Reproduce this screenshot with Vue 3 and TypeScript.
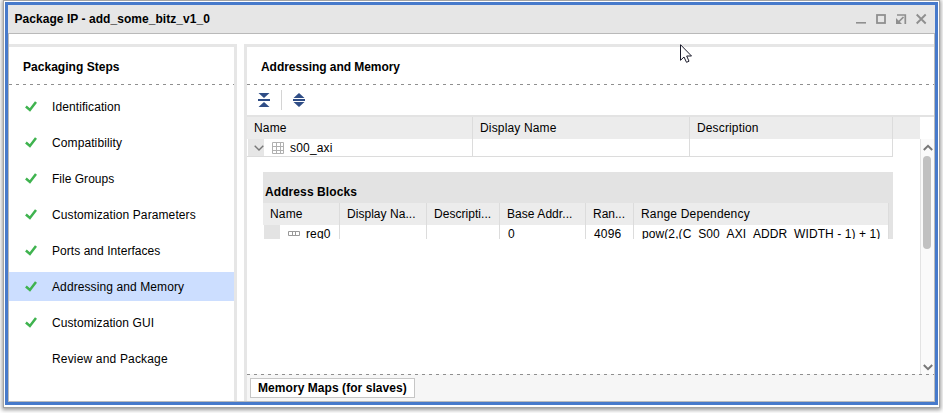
<script setup lang="ts">
interface Step { label: string; done: boolean; ls: number }
interface Cell { text: string; ls: number }

const steps: Step[] = [
  { label: 'Identification', done: true, ls: 0.09 },
  { label: 'Compatibility', done: true, ls: 0.1 },
  { label: 'File Groups', done: true, ls: 0.02 },
  { label: 'Customization Parameters', done: true, ls: 0.1 },
  { label: 'Ports and Interfaces', done: true, ls: 0.05 },
  { label: 'Addressing and Memory', done: true, ls: 0.1 },
  { label: 'Customization GUI', done: true, ls: 0.08 },
  { label: 'Review and Package', done: false, ls: 0.17 },
]
const active = 'Addressing and Memory'

const mapColumns: Cell[] = [
  { text: 'Name', ls: 0.15 },
  { text: 'Display Name', ls: 0.16 },
  { text: 'Description', ls: 0.14 },
]
const blockColumns: Cell[] = [
  { text: 'Name', ls: 0.15 },
  { text: 'Display Na...', ls: 0.04 },
  { text: 'Descripti...', ls: 0.04 },
  { text: 'Base Addr...', ls: 0.06 },
  { text: 'Ran...', ls: 0 },
  { text: 'Range Dependency', ls: 0.17 },
]
const blockValues: Cell[] = [
  { text: '', ls: 0 },
  { text: '', ls: 0 },
  { text: '0', ls: 0 },
  { text: '4096', ls: 0.15 },
  { text: 'pow(2,(C_S00_AXI_ADDR_WIDTH - 1) + 1)', ls: 0.09 },
]
const spacing = (ls: number) => ({ letterSpacing: ls + 'px' })
</script>

<template>
  <div class="desk">
    <div class="frame">
      <div class="window">
        <header class="titlebar">
          <span class="bold title">Package IP - add_some_bitz_v1_0</span>
          <svg class="controls" width="72" height="12" viewBox="0 0 72 12" fill="none" stroke="#8f8f8f" stroke-width="2">
            <path d="M0 9.800h10" stroke-width="1.600" />
            <rect x="21" y="2" width="8" height="8" stroke-width="1.800" />
            <path d="M41 2h8.300V11" stroke-width="1.700" />
            <path d="M47.500 4L42 9.500" stroke-width="1.700" />
            <path d="M40 5v6h6z" fill="#8f8f8f" stroke="none" />
            <path d="M60.700 1.500l9 9M69.700 1.500l-9 9" stroke-width="1.900" />
          </svg>
        </header>
        <main class="body">
          <aside class="steps">
            <h2 class="heading"><span class="bold">Packaging Steps</span></h2>
            <nav class="step-list">
              <div v-for="s in steps" :key="s.label" class="step" :class="{ active: s.label === active }">
                <svg class="check" width="12" height="11" viewBox="0 0 12 11">
                  <path v-if="s.done" d="M.9 5.500L4.900 9L11 .9" fill="none" stroke="#3fb34f" stroke-width="2.500" />
                </svg>
                <span :style="spacing(s.ls)">{{ s.label }}</span>
              </div>
            </nav>
          </aside>
          <section class="content">
            <h2 class="heading content-heading"><span class="bold">Addressing and Memory</span></h2>
            <div class="toolbar">
              <svg width="12" height="14" viewBox="0 0 12 14" fill="#2f4d86">
                <path d="M.5 0h11L6 5z M0 6h12v2H0z M6 9l5.500 5H.5z" />
              </svg>
              <i class="sep"></i>
              <svg width="12" height="14" viewBox="0 0 12 14" fill="#2f4d86">
                <path d="M6 0l5.500 5H.5z M0 6h12v2H0z M.5 9h11L6 14z" />
              </svg>
            </div>
            <div class="map-head">
              <div v-for="c in mapColumns" :key="c.text" class="cell"><span :style="spacing(c.ls)">{{ c.text }}</span></div>
            </div>
            <div class="scroll">
              <div class="view">
                <div class="map-row">
                  <div class="cell tree">
                    <span class="twisty"><svg width="10" height="6" viewBox="0 0 10 6"><path d="M.7.8L5 5L9.300.8" fill="none" stroke="#777" stroke-width="1.400" /></svg></span>
                    <svg class="grid-icon" width="12" height="12" viewBox="0 0 12 12"><path d="M.5.5h11v11H.5zM4.500 0v12M8.500 0v12M0 4.500h12M0 8.500h12" fill="none" stroke="#b0b0b0" /></svg>
                    <span class="map-name">s00_axi</span>
                  </div>
                  <div class="cell"></div>
                  <div class="cell"></div>
                </div>
                <div class="blocks">
                  <div class="bold blocks-title">Address Blocks</div>
                  <div class="block-grid block-head">
                    <div v-for="c in blockColumns" :key="c.text" class="cell"><span :style="spacing(c.ls)">{{ c.text }}</span></div>
                  </div>
                  <div class="block-grid block-row">
                    <div class="cell tree">
                      <span class="gutter"></span>
                      <svg class="reg-icon" width="12" height="5" viewBox="0 0 12 5"><path d="M.5.5h11v4H.5zM4.500 0v5M7.500 0v5" fill="none" stroke="#999" /></svg>
                      <span class="reg-name">reg0</span>
                    </div>
                    <div v-for="(c, i) in blockValues" :key="i" class="cell"><span :style="spacing(c.ls)">{{ c.text }}</span></div>
                  </div>
                </div>
              </div>
              <div class="scrollbar">
                <svg width="10" height="7" viewBox="0 0 10 7"><path d="M.8 6L5 1.800L9.200 6" fill="none" stroke="#777" stroke-width="2" /></svg>
                <div class="thumb"></div>
                <svg class="down" width="10" height="7" viewBox="0 0 10 7"><path d="M.8 1L5 5.200L9.200 1" fill="none" stroke="#777" stroke-width="2" /></svg>
              </div>
            </div>
            <footer class="tabs"><div class="tab bold"><span>Memory Maps (for slaves)</span></div></footer>
          </section>
        </main>
      </div>
    </div>
    <svg class="pointer" width="13" height="20" viewBox="0 0 13 20">
      <path d="M.5.700V16.300L4 13L6.500 18.300L9 17.200L6.700 12H11.500z" fill="#fff" stroke="#1b1b2b" />
    </svg>
  </div>
</template>

<style>
body { margin: 0; background: #fff; overflow: hidden; }
</style>
<style scoped>
* { box-sizing: border-box; }
.desk {
  position: relative; height: 413px; padding: 0 3px 5px; overflow: hidden;
  font: 12px/14px "Liberation Sans", Arial, sans-serif; color: #000;
}
.frame {
  width: 937px; height: 408px; padding: 1px;
  border: 1px solid #a3a3a3; background: #fff;
  box-shadow: 0 1px 4px 1px rgba(0, 0, 0, .4);
}
.window {
  height: 403px; border: 3px solid #477acb; display: flex; flex-direction: column;
  background: #fff;
}
.bold { font-weight: 700; white-space: nowrap; }
.title { letter-spacing: .05px; }
.titlebar {
  height: 29px; flex: none; background: #e6e6e6; border-bottom: 1px solid #b9b9b9;
  display: flex; align-items: center; justify-content: space-between; padding: 0 7px 0 6.5px;
}
.body {
  flex: 1; min-height: 0; display: flex; gap: 7px; padding-top: 10px;
  border: solid #bbb; border-width: 0 1px 1px;
}
.steps { width: 228px; flex: none; border: solid #e6e6e6; border-width: 3px 3px 0 0; }
.content {
  flex: 1; min-width: 0; border: solid #e6e6e6; border-width: 3px 0 0 3px;
  display: flex; flex-direction: column;
}
.heading {
  margin: 0; height: 38px; flex: none; padding: 13px 14px 0; font-size: 12px; line-height: 14px;
  letter-spacing: .03px;
  background: repeating-linear-gradient(90deg, #8f8f8f 0 3px, transparent 3px 7px) 0 100% / 100% 1px no-repeat;
}
.content-heading { letter-spacing: -.05px; }
.step-list { display: flex; flex-direction: column; gap: 7px; padding-top: 7px; }
.step { height: 29px; display: flex; align-items: center; gap: 15px; padding-left: 16px; white-space: nowrap; }
.step.active { background: #ccdeff; }
.check { margin-top: -1px; }
.toolbar { height: 30px; flex: none; display: flex; align-items: center; gap: 11px; padding-left: 11px; }
.sep { width: 1px; height: 20px; background: #d4d4d4; }
.map-head {
  height: 24px; flex: none; display: grid; grid-template-columns: 226px 217px 203px;
  background: linear-gradient(#e3e3e3, #e3e3e3) 0 0 / 100% 2px no-repeat,
    linear-gradient(#ececec, #ececec) 0 0 / 673px 100% no-repeat;
  padding-top: 2px;
}
.cell { border-right: 1px solid #dcdcdc; display: flex; align-items: center; padding-left: 7px; white-space: nowrap; overflow: hidden; }
.scroll { flex: 1; min-height: 0; display: flex; justify-content: space-between; }
.view { width: 646px; }
.map-row { height: 18px; display: grid; grid-template-columns: 226px 217px 203px; border-bottom: 1px solid #dcdcdc; }
.tree { padding-left: 1px; }
.twisty { width: 16px; height: 17px; background: #e6e6e6; display: flex; align-items: center; justify-content: flex-end; }
.grid-icon { margin: 0 6px 0 8px; }
.map-name { letter-spacing: .18px; }
.blocks { margin: 15px 0 0 16px; width: 630px; height: 67px; overflow: hidden; background: #e3e3e3; padding-right: 4px; }
.blocks-title { height: 31px; padding: 13px 0 0 2px; letter-spacing: .09px; }
.block-grid { display: grid; grid-template-columns: 77px 87px 73px 86px 48px 255px; }
.block-head { height: 22px; background: #ececec; }
.block-row { height: 18px; background: #fff; }
.gutter { width: 16px; height: 18px; background: #e3e3e3; }
.reg-icon { margin: 0 6px 2px 8px; }
.reg-name { letter-spacing: .12px; }
.block-row .cell:not(.tree) { padding-left: 8px; }
.scrollbar {
  width: 14px; background: #fafafa; border-left: 1px solid #e3e3e3; display: flex;
  flex-direction: column; align-items: center; padding: 5px 0 3px 1px;
}
.thumb { width: 8px; height: 93px; margin-top: 5px; margin-right: 2px; border-radius: 4px; background: #c1c1c1; }
.down { margin-top: auto; }
.tabs {
  height: 27px; flex: none; padding: 4px 0 0 3px;
  background: repeating-linear-gradient(90deg, #8f8f8f 0 3px, transparent 3px 7px) 0 0 / 100% 1px no-repeat #f6f6f6;
}
.tab { width: 165px; height: 20px; border: 1px solid #c6c6c6; background: #fff; padding: 2px 0 0 7px; line-height: 15px; letter-spacing: .06px; }
.pointer { position: absolute; left: 680px; top: 44px; }
</style>
